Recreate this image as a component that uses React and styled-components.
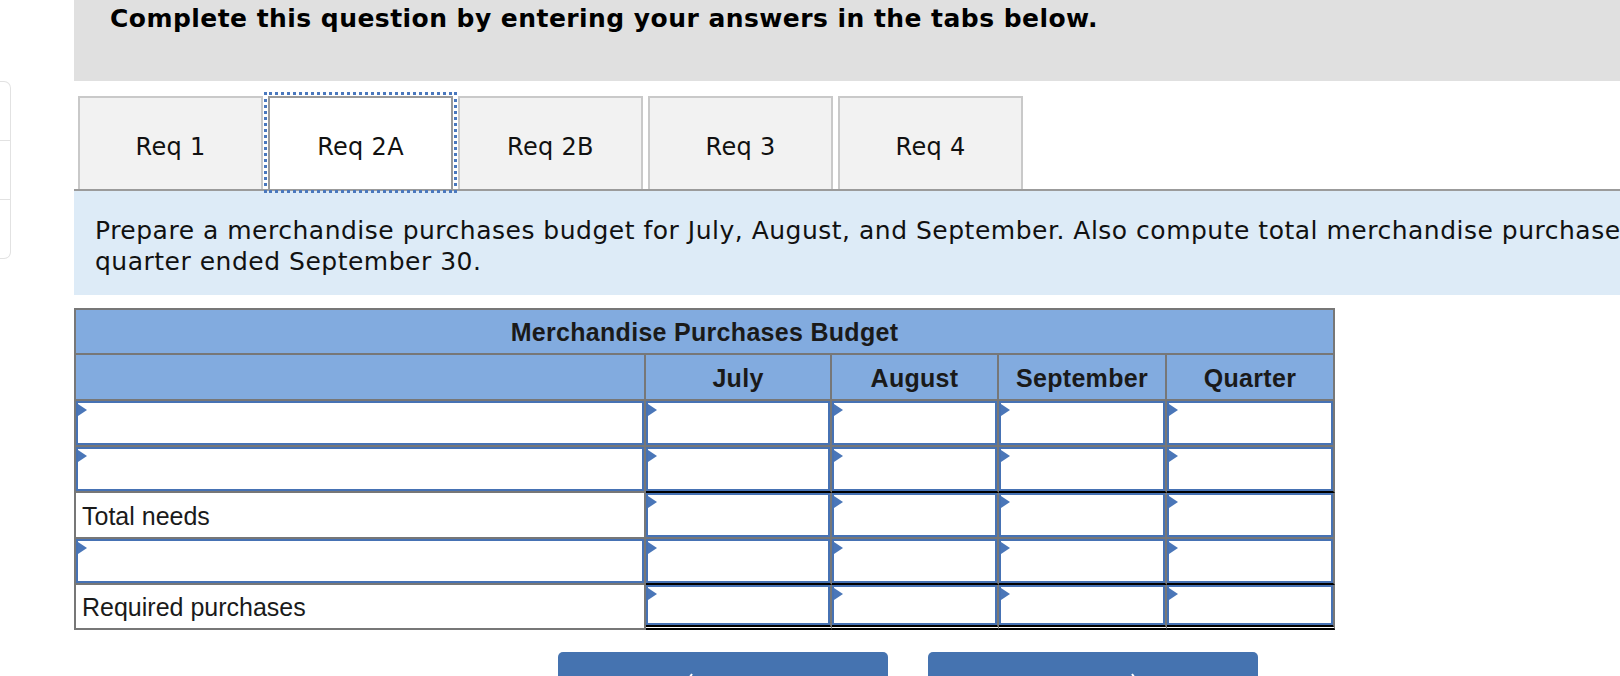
import React from 'react'
import styled, { createGlobalStyle } from 'styled-components'

const GlobalStyle = createGlobalStyle`
  html, body {
    margin: 0;
    padding: 0;
    background: #fff;
    overflow: hidden;
  }
  body {
    font-family: "DejaVu Sans", sans-serif;
  }
`

const dejavu = `"DejaVu Sans", Tahoma, sans-serif`
const arial = `"Liberation Sans", Arial, sans-serif`

const Page = styled.div`
  display: flex;
  align-items: flex-start;
  width: 1620px;
  height: 676px;
  overflow: hidden;
`

const SideCard = styled.div`
  flex: none;
  width: 10px;
  margin-top: 81px;
  border: 1px solid #e2e2e2;
  border-left: none;
  border-radius: 0 7px 7px 0;
  display: flex;
  flex-direction: column;
`

const SideItem = styled.div`
  height: 58px;
  & + & {
    border-top: 1px solid #e2e2e2;
  }
`

const Main = styled.div`
  flex: none;
  width: 1668px;
  margin-left: 63px;
`

const Banner = styled.div`
  height: 81px;
  box-sizing: border-box;
  background: #e0e0e0;
  padding: 4px 0 0 36px;
`

const BannerTitle = styled.h1`
  margin: 0;
  font-family: ${dejavu};
  font-size: 25px;
  line-height: 30px;
  font-weight: bold;
  letter-spacing: 0.45px;
  color: #000;
`

const TabStrip = styled.div`
  display: flex;
  align-items: flex-end;
  margin-top: 15px;
  padding-left: 4px;
  height: 95px;
  box-sizing: border-box;
  border-bottom: 2px solid #9b9b9b;
`

const Tab = styled.button`
  flex: none;
  width: 185px;
  height: 93px;
  margin: 0 5px 0 0;
  padding: 6px 0 0;
  box-sizing: border-box;
  border: 2px solid ${p => (p.$active ? '#9a9a9a' : '#c9c9c9')};
  border-bottom: none;
  background: ${p => (p.$active ? '#fff' : '#f2f2f2')};
  font-family: ${dejavu};
  font-size: 24px;
  letter-spacing: 0.3px;
  color: #111;
  cursor: pointer;
  outline: ${p => (p.$active ? '3px dotted #4a78bd' : 'none')};
  outline-offset: 1px;
`

const Prompt = styled.p`
  margin: 0;
  background: #ddebf7;
  padding: 24px 21px 18px;
  font-family: ${dejavu};
  font-size: 25px;
  line-height: 31px;
  letter-spacing: 0.5px;
  white-space: nowrap;
  color: #111;
`

const Budget = styled.div`
  display: grid;
  grid-template-columns: 570px 186px 167px 168px 168px;
  grid-template-rows: 45px 46px 46px 46px 46px 46px 45px;
  width: 1261px;
  box-sizing: border-box;
  margin-top: 13px;
  border-top: 2px solid #777;
  border-left: 2px solid #777;
  font-family: ${arial};
  color: #1a1a1a;
`

const Cell = styled.div`
  box-sizing: border-box;
  border-right: 2px solid #777;
  border-bottom: ${p =>
    p.$rule === 'double'
      ? '5px double #000'
      : p.$rule === 'single'
      ? '2px solid #000'
      : '2px solid #777'};
  background: #fff;
  display: flex;
  align-items: stretch;
  min-width: 0;
`

const HeadCell = styled(Cell)`
  background: #82abdf;
  align-items: center;
  justify-content: center;
  font-size: 25px;
  font-weight: bold;
  letter-spacing: 0.3px;
  padding-top: 2px;
`

const TitleCell = styled(HeadCell)`
  grid-column: 1 / -1;
`

const LabelCell = styled(Cell)`
  align-items: center;
  padding: 2px 0 0 6px;
  font-size: 25px;
`

const Field = styled.div`
  position: relative;
  flex: 1;
  box-sizing: border-box;
  border: 2px solid #4672b4;
  background: #fff;

  &::before {
    content: '';
    position: absolute;
    left: 0;
    top: 1px;
    border-left: 9px solid #4a76b8;
    border-top: 6px solid transparent;
    border-bottom: 6px solid transparent;
  }
`

const FieldInput = styled.input`
  width: 100%;
  height: 100%;
  box-sizing: border-box;
  border: none;
  outline: none;
  background: transparent;
  padding: 0 8px;
  font-family: ${arial};
  font-size: 22px;
`

const ButtonRow = styled.div`
  display: flex;
  justify-content: center;
  gap: 40px;
  margin-top: 22px;
`

const NavButton = styled.button`
  width: 330px;
  height: 80px;
  border: none;
  border-radius: 5px;
  background: #4573b0;
  color: #fff;
  display: flex;
  align-items: flex-start;
  justify-content: center;
  gap: 10px;
  padding: 21px 0 0;
  font-family: ${dejavu};
  font-size: 22px;
  line-height: 26px;
`

const NavLabel = styled.span`
  margin-top: 10px;
`

const Chevron = ({ dir }) => (
  <svg width="14" height="30" viewBox="0 0 14 30" fill="none">
    <path
      d={dir === 'left' ? 'M12 1 L2 15 L12 29' : 'M2 1 L12 15 L2 29'}
      stroke="#fff"
      strokeWidth="2"
    />
  </svg>
)

const InputCell = ({ rule }) => (
  <Cell $rule={rule}>
    <Field>
      <FieldInput type="text" />
    </Field>
  </Cell>
)

const rows = [
  { label: null, rule: null },
  { label: null, rule: 'single' },
  { label: 'Total needs', rule: null },
  { label: null, rule: 'single' },
  { label: 'Required purchases', rule: 'double' },
]

const months = ['July', 'August', 'September', 'Quarter']

const tabs = ['Req 1', 'Req 2A', 'Req 2B', 'Req 3', 'Req 4']

export default function App() {
  return (
    <>
      <GlobalStyle />
      <Page>
        <SideCard>
          <SideItem />
          <SideItem />
          <SideItem />
        </SideCard>
        <Main>
          <Banner>
            <BannerTitle>Complete this question by entering your answers in the tabs below.</BannerTitle>
          </Banner>
          <TabStrip>
            {tabs.map(t => (
              <Tab key={t} $active={t === 'Req 2A'}>{t}</Tab>
            ))}
          </TabStrip>
          <Prompt>
            Prepare a merchandise purchases budget for July, August, and September. Also compute total merchandise purchases for the
            <br />
            quarter ended September 30.
          </Prompt>
          <Budget>
            <TitleCell>Merchandise Purchases Budget</TitleCell>
            <HeadCell />
            {months.map(m => (
              <HeadCell key={m}>{m}</HeadCell>
            ))}
            {rows.map((r, i) => (
              <React.Fragment key={i}>
                {r.label ? <LabelCell>{r.label}</LabelCell> : <InputCell />}
                {months.map(m => (
                  <InputCell key={m} rule={r.rule} />
                ))}
              </React.Fragment>
            ))}
          </Budget>
          <ButtonRow>
            <NavButton>
              <Chevron dir="left" />
              <NavLabel>Req 1</NavLabel>
            </NavButton>
            <NavButton>
              <NavLabel>Req 2B</NavLabel>
              <Chevron dir="right" />
            </NavButton>
          </ButtonRow>
        </Main>
      </Page>
    </>
  )
}
